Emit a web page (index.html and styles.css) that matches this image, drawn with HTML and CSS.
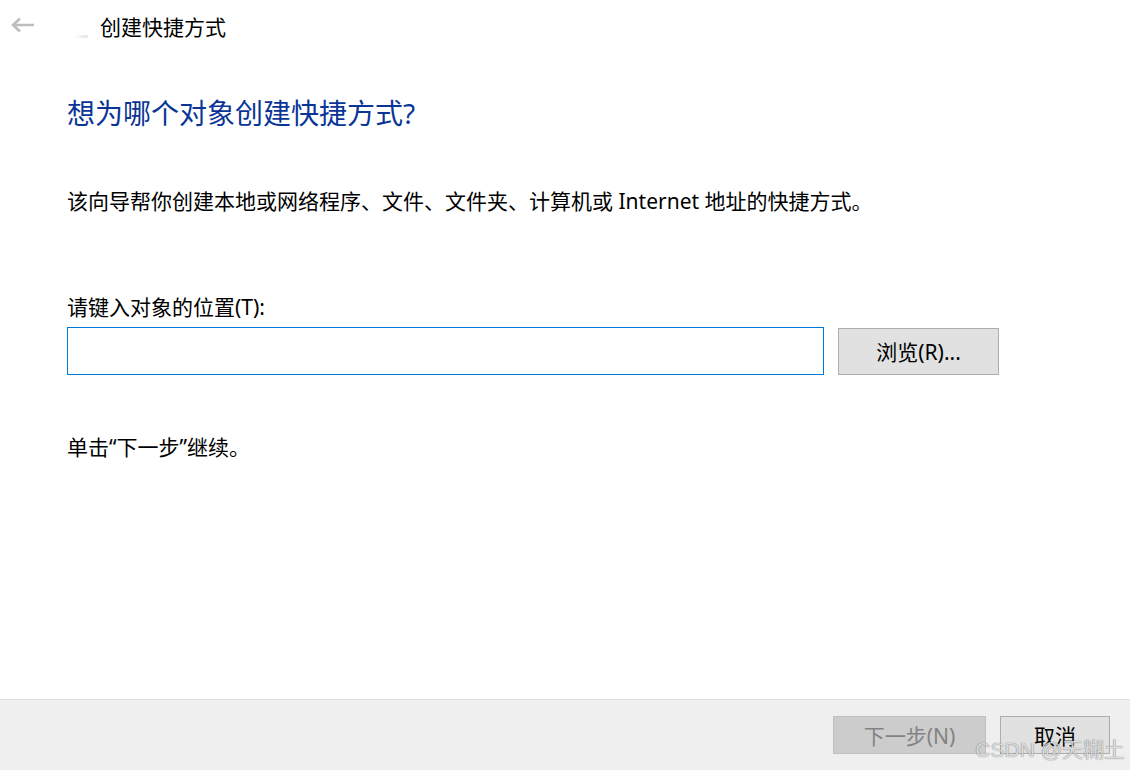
FILE: index.html
```html
<!DOCTYPE html>
<html lang="zh-CN">
<head>
    <meta charset="UTF-8">
    <title>创建快捷方式</title>
    <link rel="stylesheet" href="styles.css">
</head>
<body>
    <div class="wizard">
        <div class="title-bar">
            <span class="back-arrow">
                <svg width="26" height="16" viewBox="0 0 26 16">
                    <path d="M3 8 H24 M10 1.5 L3 8 L10 14.5" fill="none" stroke="#bdbdbd" stroke-width="2.6"/>
                </svg>
            </span>
            <span class="app-icon"></span>
            <span class="title-text">创建快捷方式</span>
        </div>

        <div class="content">
            <h1 class="heading">想为哪个对象创建快捷方式?</h1>
            <p class="desc">该向导帮你创建本地或网络程序、文件、文件夹、计算机或 Internet 地址的快捷方式。</p>
            <div class="label">请键入对象的位置(T):</div>
            <div class="input-row">
                <input type="text" class="location-input">
                <button class="btn browse-btn">浏览(R)...</button>
            </div>
            <p class="hint">单击“下一步”继续。</p>
        </div>

        <div class="footer">
            <button class="btn next-btn" disabled>下一步(N)</button>
            <button class="btn cancel-btn">取消</button>
        </div>
        <div class="watermark">CSDN @天糊土</div>
    </div>
</body>
</html>
```

FILE: styles.css
```css
html, body {
    margin: 0;
    padding: 0;
    height: 100%;
    background-color: #fff;
}

body {
    font-family: "Noto Sans", "Noto Sans CJK SC", sans-serif;
    color: #000;
}

.wizard {
    position: relative;
    display: flex;
    flex-direction: column;
    height: 770px;
}

.title-bar {
    display: flex;
    align-items: center;
    height: 54px;
}

.back-arrow {
    display: flex;
    margin-left: 10px;
    margin-top: -4px;
}

.app-icon {
    width: 14px;
    height: 3px;
    margin-left: 38px;
    margin-top: 18px;
    background: linear-gradient(to right, rgba(220,220,220,0), #e2e2e2);
    border-radius: 2px;
}

.title-text {
    margin-left: 12px;
    font-size: 21px;
    line-height: 54px;
}

.content {
    flex: 1;
    padding-left: 67px;
}

.heading {
    margin: 39px 0 0 0;
    font-size: 28px;
    font-weight: normal;
    line-height: 40px;
    color: #0a3597;
}

.desc {
    margin: 53px 0 0 0;
    font-size: 21px;
    line-height: 30px;
}

.label {
    margin-top: 76px;
    font-size: 21px;
    line-height: 30px;
}

.input-row {
    display: flex;
    align-items: center;
    gap: 14px;
    margin-top: 5px;
}

.location-input {
    box-sizing: border-box;
    width: 757px;
    height: 48px;
    margin: 0;
    border: 1px solid #0078d7;
    outline: none;
    padding: 0 6px;
    font-size: 20px;
}

.btn {
    box-sizing: border-box;
    margin: 0;
    font-family: "Noto Sans", "Noto Sans CJK SC", sans-serif;
    font-size: 21px;
    color: #000;
    background-color: #e1e1e1;
    border: 1px solid #adadad;
    padding: 0;
}

.browse-btn {
    width: 161px;
    height: 47px;
}

.hint {
    margin: 57px 0 0 0;
    font-size: 21px;
    line-height: 30px;
}

.footer {
    display: flex;
    justify-content: flex-end;
    align-items: flex-start;
    gap: 14px;
    height: 71px;
    padding: 16px 20px 0 0;
    box-sizing: border-box;
    background-color: #efefef;
    border-top: 1px solid #dfdfdf;
}

.next-btn {
    width: 153px;
    height: 38px;
    background-color: #cccccc;
    border-color: #bfbfbf;
    color: #838383;
}

.cancel-btn {
    width: 110px;
    height: 38px;
}

.watermark {
    position: absolute;
    right: 5px;
    bottom: 6px;
    font-size: 21px;
    line-height: 28px;
    color: rgba(255, 255, 255, 0.8);
    text-shadow: 0 0 1px rgba(0, 0, 0, 0.7);
    font-family: "Liberation Sans", "Noto Sans CJK SC", sans-serif;
}
```
